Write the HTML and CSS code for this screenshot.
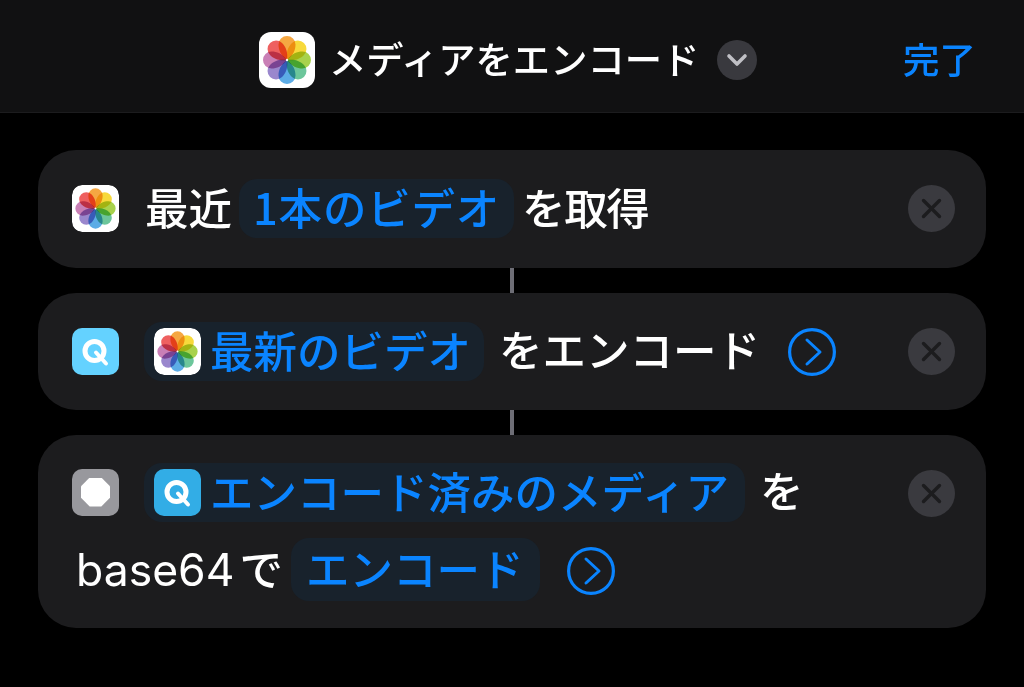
FILE: index.html
```html
<!DOCTYPE html>
<html lang="ja">
<head>
    <meta charset="UTF-8">
    <meta name="viewport" content="width=device-width, initial-scale=1.0">
    <title>メディアをエンコード</title>
    <link rel="stylesheet" href="styles.css">
</head>
<body>
    <!-- Shared icons -->
    <svg class="defs" width="0" height="0" aria-hidden="true">
        <defs>
            <path id="petal" d="M28 28C21.5 23 19.5 18 19.5 12.5A8.5 8.5 0 0 1 36.5 12.5C36.5 18 34.5 23 28 28Z"/>
            <symbol id="photos" viewBox="0 0 56 56">
                <rect width="56" height="56" rx="12" fill="#fff"/>
                <g class="petals">
                    <use href="#petal" fill="#f5a742"/>
                    <use href="#petal" fill="#f7d93b" transform="rotate(45 28 28)"/>
                    <use href="#petal" fill="#a8d24c" transform="rotate(90 28 28)"/>
                    <use href="#petal" fill="#6cc69b" transform="rotate(135 28 28)"/>
                    <use href="#petal" fill="#5cace6" transform="rotate(180 28 28)"/>
                    <use href="#petal" fill="#9a87cd" transform="rotate(225 28 28)"/>
                    <use href="#petal" fill="#c97fb6" transform="rotate(270 28 28)"/>
                    <use href="#petal" fill="#ee6060" transform="rotate(315 28 28)"/>
                </g>
                <circle cx="28" cy="28" r="1.2" fill="#fff"/>
            </symbol>
            <symbol id="quick" viewBox="0 0 47 47">
                <circle cx="22.5" cy="23" r="9.5" fill="none" stroke="#fff" stroke-width="5"/>
                <path d="M24 24.5l10 11" fill="none" stroke="#fff" stroke-width="4" stroke-linecap="round"/>
            </symbol>
            <symbol id="close" viewBox="0 0 47 47">
                <circle cx="23.5" cy="23.5" r="23.5" fill="#3a3a3f"/>
                <path d="M15.5 15.5l16 16M31.5 15.5l-16 16" fill="none" stroke="#1c1c1e" stroke-width="3.4" stroke-linecap="round"/>
            </symbol>
            <symbol id="arrow" viewBox="0 0 48 48">
                <circle cx="24" cy="24" r="22.4" fill="none" stroke="#0a84ff" stroke-width="3.2"/>
                <path d="M19 12l13 12-13 12" fill="none" stroke="#0a84ff" stroke-width="3" stroke-linecap="round" stroke-linejoin="round"/>
            </symbol>
        </defs>
    </svg>

    <!-- Header -->
    <header class="top-bar">
        <div class="title-group">
            <svg class="title-icon"><use href="#photos"/></svg>
            <h1>メディアをエンコード</h1>
            <span class="title-menu">
                <svg width="22" height="14" viewBox="0 0 22 14"><path d="M3 3l8 8 8-8" fill="none" stroke="#c0c0c5" stroke-width="3.6" stroke-linecap="round" stroke-linejoin="round"/></svg>
            </span>
        </div>
        <a class="done-link" href="#">完了</a>
    </header>

    <!-- Actions -->
    <main class="actions">
        <section class="card">
            <div class="card-row">
                <svg class="app-icon"><use href="#photos"/></svg>
                <span class="label label-first">最近</span>
                <span class="token token-count">1本のビデオ</span>
                <span class="label label-tight">を取得</span>
            </div>
            <svg class="close-btn"><use href="#close"/></svg>
        </section>
        <div class="connector"></div>
        <section class="card">
            <div class="card-row">
                <span class="app-icon icon-cyan"><svg><use href="#quick"/></svg></span>
                <span class="token token-icon">
                    <svg class="app-icon"><use href="#photos"/></svg>
                    <span class="token-text">最新のビデオ</span>
                </span>
                <span class="label label-after">をエンコード</span>
                <svg class="arrow-btn"><use href="#arrow"/></svg>
            </div>
            <svg class="close-btn"><use href="#close"/></svg>
        </section>
        <div class="connector"></div>
        <section class="card card-tall">
            <div class="card-lines">
                <div class="card-row">
                    <span class="app-icon icon-grey"><span class="stop-shape"></span></span>
                    <span class="token token-icon token-long">
                        <span class="app-icon icon-blue"><svg><use href="#quick"/></svg></span>
                        <span class="token-text">エンコード済みのメディア</span>
                    </span>
                    <span class="label label-after">を</span>
                </div>
                <div class="card-row row-second">
                    <span class="label-latin">base64</span>
                    <span class="label label-de">で</span>
                    <span class="token token-mode"><span class="token-text">エンコード</span></span>
                    <svg class="arrow-btn"><use href="#arrow"/></svg>
                </div>
            </div>
            <svg class="close-btn"><use href="#close"/></svg>
        </section>
    </main>
</body>
</html>
```

FILE: styles.css
```css
/* General Styles */
body {
    margin: 0;
    height: 687px;
    overflow: hidden;
    background-color: #000;
    color: #fff;
    font-family: "Noto Sans CJK JP", "Inter", sans-serif;
}
.defs {
    position: absolute;
}

/* Header */
.top-bar {
    height: 113px;
    box-sizing: border-box;
    background-color: #111112;
    border-bottom: 1px solid #1c1c1e;
    display: flex;
    justify-content: space-between;
    align-items: center;
    padding: 8px 48px 0 259px;
}
.title-group {
    display: flex;
    align-items: center;
}
.title-icon {
    width: 56px;
    height: 56px;
}
.top-bar h1 {
    margin: 0 18px 0 14px;
    padding-bottom: 3px;
    font-size: 37.3px;
    font-weight: 500;
    line-height: 53px;
    white-space: nowrap;
}
.title-menu {
    width: 40px;
    height: 40px;
    border-radius: 50%;
    background-color: #39393e;
    display: flex;
    align-items: center;
    justify-content: center;
}
.done-link {
    padding-bottom: 4px;
    color: #0a84ff;
    font-size: 36.5px;
    font-weight: 500;
    text-decoration: none;
}

/* Action cards */
.actions {
    padding: 37px 38px 0;
    display: flex;
    flex-direction: column;
}
.card {
    height: 117.5px;
    box-sizing: border-box;
    background-color: #1c1c1e;
    border-radius: 38px;
    padding: 35px 31px 0 34px;
    display: flex;
    justify-content: space-between;
    align-items: flex-start;
}
.card-tall {
    height: 193px;
    padding-top: 27px;
}
.card-tall .close-btn {
    margin-top: 8px;
}
.connector {
    width: 4px;
    height: 25px;
    margin-left: 472px;
    background-color: #6e6e76;
}
.card-row {
    display: flex;
    align-items: center;
    height: 47px;
    font-size: 43.5px;
    font-weight: 500;
    white-space: nowrap;
}
.card-tall .card-row {
    height: 60px;
}
.card-tall .row-second {
    margin: 16px 0 0 4px;
    height: 63px;
}

/* Icons */
.app-icon {
    width: 47px;
    height: 47px;
    flex: none;
    border-radius: 10px;
    display: inline-flex;
    align-items: center;
    justify-content: center;
}
.app-icon svg {
    width: 47px;
    height: 47px;
}
.icon-cyan {
    background-color: #64d2ff;
}
.icon-blue {
    background-color: #32ade6;
}
.icon-grey {
    background-color: #98989d;
}
.stop-shape {
    width: 29px;
    height: 29px;
    background-color: #fff;
    clip-path: polygon(30% 0, 70% 0, 100% 30%, 100% 70%, 70% 100%, 30% 100%, 0 70%, 0 30%);
}
.petals {
    isolation: isolate;
}
.petals use {
    mix-blend-mode: multiply;
}
.close-btn {
    width: 47px;
    height: 47px;
    flex: none;
}
.arrow-btn {
    width: 48px;
    height: 48px;
    flex: none;
    margin: 2px 0 0 28px;
}

/* Text and tokens */
.label {
    padding-bottom: 5px;
}
.label-first {
    margin-left: 26px;
}
.label-after {
    margin-left: 15px;
}
.label-tight {
    letter-spacing: -1.4px;
}
.label-latin {
    font-family: "Inter", "Noto Sans CJK JP", sans-serif;
    font-size: 44.5px;
    font-weight: 400;
}
.label-de {
    margin-left: 5px;
}
.token {
    color: #0a84ff;
    background-color: #18222c;
    border-radius: 18px;
    display: inline-flex;
    align-items: center;
    gap: 9px;
    height: 59px;
    flex: none;
}
.token-text {
    padding-bottom: 4px;
}
.token-count {
    margin: 0 8px 0 7px;
    padding: 0 14px 4px;
    height: 55px;
    letter-spacing: 0.8px;
}
.token-icon {
    margin-left: 25px;
    padding: 0 13px 0 10px;
}
.token-long {
    padding-right: 16px;
}
.token-mode {
    margin-left: 8px;
    padding: 0 17px 0 15px;
    height: 63px;
}
.token-mode + .arrow-btn {
    margin-left: 27px;
}
```
